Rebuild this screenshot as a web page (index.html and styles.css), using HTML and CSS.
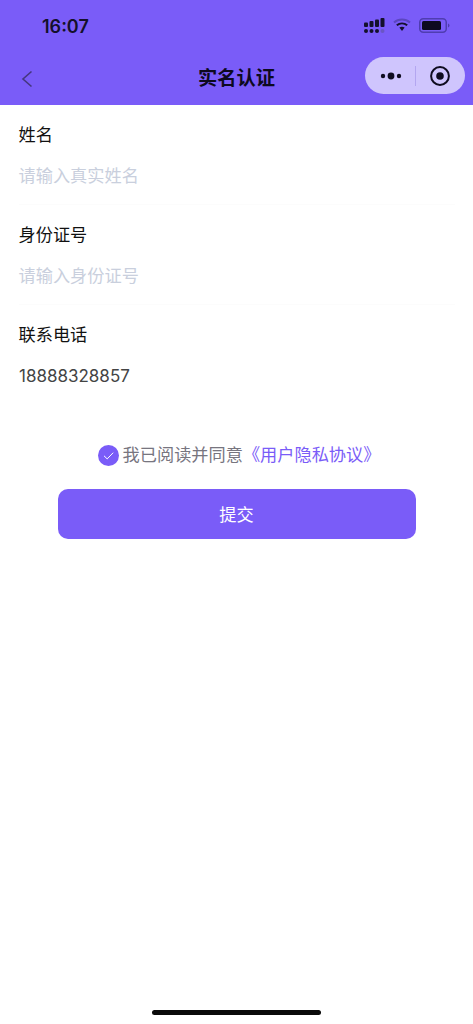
FILE: index.html
```html
<!DOCTYPE html>
<html lang="zh-CN">
<head>
    <meta charset="UTF-8">
    <meta name="viewport" content="width=device-width, initial-scale=1.0">
    <title>实名认证</title>
    <link rel="stylesheet" href="styles.css">
</head>
<body>
    <div class="page">
        <header class="top">
            <div class="status-bar">
                <span class="time">16:07</span>
                <div class="status-icons">
                    <svg class="signal" width="21" height="16" viewBox="0 0 21 16">
                        <rect x="0" y="4.5" width="4" height="4.5" rx="1" fill="#14102b"/>
                        <rect x="5.5" y="3" width="4" height="6" rx="1" fill="#14102b"/>
                        <rect x="11" y="1.5" width="4" height="7.5" rx="1" fill="#14102b"/>
                        <rect x="16.5" y="0" width="4" height="9" rx="1" fill="#14102b"/>
                        <circle cx="2" cy="13" r="2" fill="#14102b"/>
                        <circle cx="7.5" cy="13" r="2" fill="#14102b"/>
                        <circle cx="13" cy="13" r="2" fill="#14102b"/>
                        <circle cx="18.5" cy="13" r="2" fill="#6a55c4"/>
                    </svg>
                    <svg class="wifi" width="18" height="14" viewBox="0 0 18 14">
                        <path d="M1 4.5C5.5.5 12.5.5 17 4.5" fill="none" stroke="#5b46c0" stroke-width="2"/>
                        <path d="M3.8 7.2C6.8 4.8 11.2 4.8 14.2 7.2" fill="none" stroke="#14102b" stroke-width="2"/>
                        <path d="M6.4 9.4C8 8.4 10 8.4 11.6 9.4L9 13Z" fill="#14102b"/>
                    </svg>
                    <svg class="battery" width="31" height="15" viewBox="0 0 31 15">
                        <rect x="0.75" y="0.75" width="26.5" height="13.5" rx="3.5" fill="none" stroke="#4f3db0" stroke-width="1.5"/>
                        <rect x="3" y="3" width="19" height="9" rx="1.5" fill="#0d0a1f"/>
                        <path d="M29 5.5C30.2 6 30.5 6.7 30.5 7.5S30.2 9 29 9.5Z" fill="#4f3db0"/>
                    </svg>
                </div>
            </div>
            <div class="nav-bar">
                <svg class="back" width="12" height="18" viewBox="0 0 12 18">
                    <path d="M10.5 1.5L2 9l8.5 7.5" fill="none" stroke="#45377f" stroke-width="1.6"/>
                </svg>
                <h1>实名认证</h1>
                <div class="capsule">
                    <svg class="more" width="22" height="8" viewBox="0 0 22 8">
                        <circle cx="3" cy="4" r="2.2" fill="#0f0c20"/>
                        <circle cx="11" cy="4" r="3.4" fill="#0f0c20"/>
                        <circle cx="19" cy="4" r="2.2" fill="#0f0c20"/>
                    </svg>
                    <span class="capsule-line"></span>
                    <svg class="target" width="20" height="20" viewBox="0 0 20 20">
                        <circle cx="10" cy="10" r="8.9" fill="none" stroke="#0f0c20" stroke-width="2"/>
                        <circle cx="10" cy="10" r="3.8" fill="#0f0c20"/>
                    </svg>
                </div>
            </div>
        </header>

        <form class="form">
            <div class="field">
                <label>姓名</label>
                <div class="placeholder">请输入真实姓名</div>
            </div>
            <div class="field">
                <label>身份证号</label>
                <div class="placeholder">请输入身份证号</div>
            </div>
            <div class="field">
                <label>联系电话</label>
                <div class="value">18888328857</div>
            </div>
        </form>

        <div class="agree">
            <svg class="check" width="21" height="21" viewBox="0 0 21 21">
                <circle cx="10.5" cy="10.5" r="10.5" fill="#7a5cf8"/>
                <path d="M6 10.8l3.2 3.1 6-6.2" fill="none" stroke="#fff" stroke-width="1"/>
            </svg>
            <span>我已阅读并同意</span><a class="link">《用户隐私协议》</a>
        </div>
        <button class="submit" type="button">提交</button>

        <div class="home-bar"></div>
    </div>
</body>
</html>
```

FILE: styles.css
```css
* {
    margin: 0;
    padding: 0;
    box-sizing: border-box;
    font-family: "Inter", "Noto Sans CJK SC", sans-serif;
}

body {
    background-color: #fff;
}

.page {
    height: 1024px;
    display: flex;
    flex-direction: column;
    position: relative;
    overflow: hidden;
}

.top {
    background-color: #7a5cf8;
    height: 105px;
}

.status-bar {
    height: 52px;
    padding: 18px 23px 0 42px;
    display: flex;
    justify-content: space-between;
    align-items: flex-start;
}

.time {
    font-size: 18px;
    font-weight: 600;
    line-height: 18px;
    color: #14102b;
}

.status-icons {
    display: flex;
    align-items: flex-start;
    gap: 8px;
}

.nav-bar {
    height: 53px;
    padding: 0 8px;
    display: grid;
    grid-template-columns: 1fr auto 1fr;
    align-items: center;
}

.back {
    margin-left: 13px;
}

.nav-bar h1 {
    font-size: 19.3px;
    line-height: 24px;
    font-weight: 700;
    color: #0d0a1f;
    margin-bottom: 2px;
}

.capsule {
    justify-self: end;
    width: 100px;
    height: 37px;
    margin-top: -6px;
    border-radius: 19px;
    background-color: #cfc5fd;
    display: flex;
    align-items: center;
    padding-left: 15px;
}

.capsule-line {
    width: 1px;
    height: 20px;
    margin: 0 14px 0 13px;
    background-color: #b3a6f0;
}

.form {
    padding: 0 18.5px;
}

.field {
    height: 100px;
    padding-top: 18px;
    border-bottom: 1px solid #fcfcfc;
}

.field:last-child {
    border-bottom: none;
}

.field label {
    display: block;
    font-size: 17.2px;
    line-height: 24px;
    color: #111;
}

.placeholder,
.value {
    margin-top: 17px;
    line-height: 24px;
}

.placeholder {
    font-size: 17.2px;
    color: #c9cfdd;
}

.value {
    font-size: 17px;
    padding-left: 0.5px;
    color: #444;
}

.agree {
    margin-top: 38px;
    padding-left: 5px;
    display: flex;
    align-items: center;
    justify-content: center;
    font-size: 17.2px;
    line-height: 24px;
    color: #77757f;
}

.check {
    margin-right: 4px;
}

.link {
    color: #7a5cf8;
}

.submit {
    display: block;
    width: 358px;
    height: 50px;
    margin: 22px auto 0;
    padding-bottom: 2px;
    border: none;
    border-radius: 10px;
    background-color: #7a5cf8;
    color: #fff;
    font-size: 17.2px;
}

.home-bar {
    position: absolute;
    left: 152px;
    bottom: 9px;
    width: 169px;
    height: 5px;
    border-radius: 3px;
    background-color: #0a0a0a;
}
```
